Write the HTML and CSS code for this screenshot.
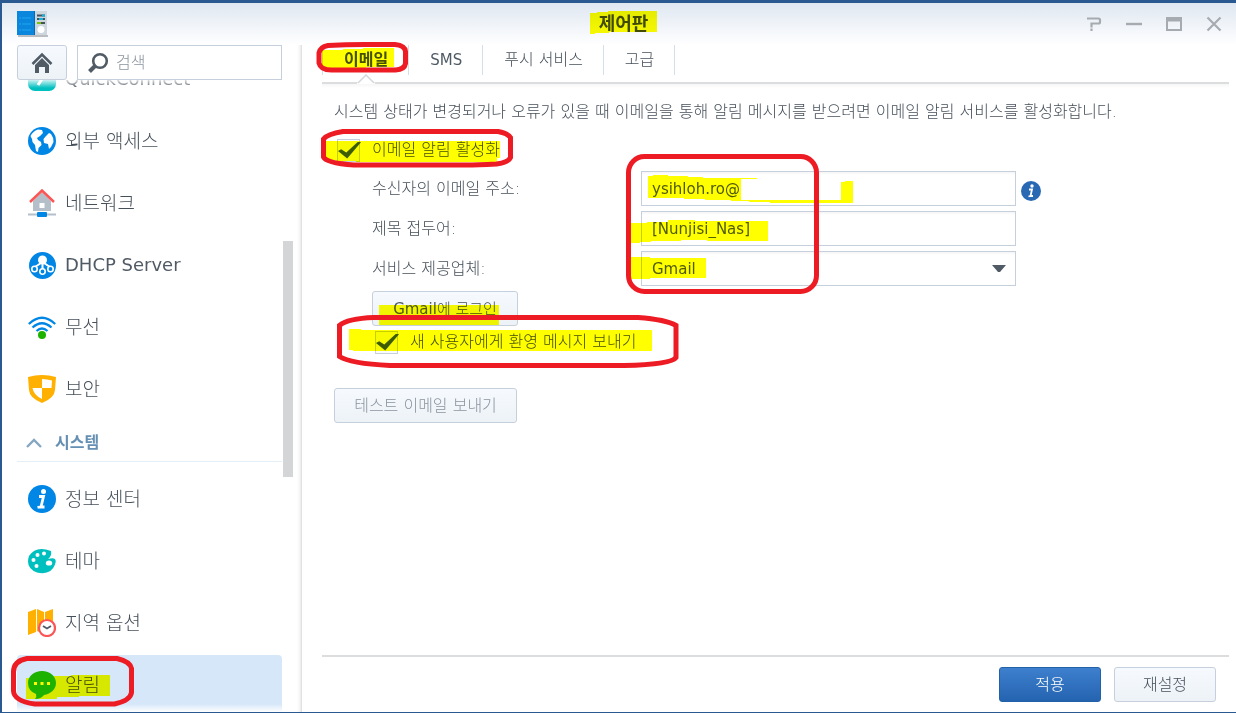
FILE: index.html
```html
<!DOCTYPE html>
<html lang="ko">
<head>
<meta charset="utf-8">
<title>제어판</title>
<link rel="stylesheet" href="styles.css">
</head>
<body>
<div class="window">
  <header class="titlebar">
    <svg class="app-icon" width="32" height="28" viewBox="0 0 32 28" aria-hidden="true">
      <rect x="1" y="25" width="30" height="2" fill="#b9bcc0"/>
      <rect x="17" y="1" width="13" height="24" fill="#cdd5dd"/>
      <rect x="0" y="1" width="18" height="24" fill="#0a86dc"/>
      <path d="M17 1h1v24h-1z" fill="#0869b4"/>
      <path d="M2 8h2M5 8h9M2 14h2M5 14h9M2 20h2M5 20h9" stroke="#20a8f2" stroke-width="1.2"/>
      <path d="M20 5.500h8M20 9h8M20 13h8" stroke="#46525e" stroke-width="1.800"/>
      <path d="M25 5.500h3M22 9h4" stroke="#10b5e0" stroke-width="1.800"/>
      <path d="M20 13h4" stroke="#7ed000" stroke-width="1.800"/>
      <circle cx="24" cy="19.500" r="3.500" fill="#fff"/>
    </svg>
    <h1 class="title">제어판</h1>
    <div class="window-tools">
      <button class="tool" aria-label="도움말"><svg width="16" height="16" viewBox="0 0 16 16"><path d="M1 2.500h11.500q1.500 0 1.500 1.500v2q0 1.500-1.500 1.500H5.500v4M5.500 12.500v2.500" fill="none" stroke="#a6abb2" stroke-width="2.200"/></svg></button>
      <button class="tool" aria-label="최소화"><svg width="16" height="16" viewBox="0 0 16 16"><path d="M0 8h16" stroke="#a6abb2" stroke-width="2.400"/></svg></button>
      <button class="tool" aria-label="최대화"><svg width="16" height="16" viewBox="0 0 16 16"><path d="M1 2h14v12H1z" fill="none" stroke="#a6abb2" stroke-width="2"/><path d="M0 1.500h16v4H0z" fill="#a6abb2"/></svg></button>
      <button class="tool" aria-label="닫기"><svg width="16" height="16" viewBox="0 0 16 16"><path d="M1.500 1.500l13 13M14.500 1.500l-13 13" stroke="#a6abb2" stroke-width="2.200"/></svg></button>
    </div>
  </header>

  <div class="columns">
    <aside class="sidebar">
      <div class="sidebar-top">
        <button class="home" aria-label="홈"><svg width="22" height="22" viewBox="0 0 22 22"><path d="M1.500 12L11 2.500 20.500 12" fill="none" stroke="#505b66" stroke-width="2.500"/><path d="M4 13l7-7 7 7v8h-4v-6H8v6H4z" fill="#505b66"/></svg></button>
        <label class="search">
          <svg width="22" height="22" viewBox="0 0 22 22" aria-hidden="true"><circle cx="13" cy="9" r="6.800" fill="none" stroke="#505b66" stroke-width="2.600"/><path d="M8 14l-5.500 5.500" stroke="#505b66" stroke-width="4"/></svg>
          <input class="search-input" type="text" placeholder="검색" aria-label="검색">
        </label>
      </div>
      <nav class="list">
        <a class="item latin" href="#quickconnect">
          <svg width="28" height="28" viewBox="0 0 28 28"><rect x="0" y="6" width="28" height="20" rx="7" fill="#00bfbf"/><path d="M10 20l6-9" stroke="#fff" stroke-width="3"/></svg>QuickConnect</a>
        <a class="item" href="#external">
          <svg width="28" height="28" viewBox="0 0 28 28"><circle cx="14" cy="14" r="14" fill="#0086e5"/><path d="M2.500 9Q5 4 10 2.500l4 .5 1 3-3 3-3 2 1 2 3 2 .5 3-3 3-.5 4-2-1-1-6-2.500-3-.5-3zM18 9l3-3 2 1q3 4 2.500 8L23 20l-2 2-1-5-4-1-.5-4z" fill="#fff"/></svg>외부 액세스</a>
        <a class="item" href="#network">
          <svg width="28" height="28" viewBox="0 0 28 28"><path d="M5 12l9-9 9 9v10H5z" fill="#b4bfca"/><path d="M2 13L14 1.500 26 13" fill="none" stroke="#fc5555" stroke-width="2.500"/><rect x="11.500" y="14" width="5" height="5" fill="#fff"/><path d="M0 25.500h28" stroke="#b4bfca" stroke-width="2"/><rect x="9" y="23" width="10" height="5" rx="1" fill="#0086e5"/></svg>네트워크</a>
        <a class="item latin" href="#dhcp">
          <svg width="28" height="28" viewBox="0 0 28 28"><circle cx="14.500" cy="14.500" r="13.500" fill="#0086e5"/><path d="M14.500 12v6M13 12l-6 4M16 12l6 4" stroke="#fff" stroke-width="2"/><circle cx="14.500" cy="9" r="4.500" fill="#fff"/><g fill="#0086e5" stroke="#fff" stroke-width="1.600"><circle cx="6.500" cy="18" r="2.700"/><circle cx="14.500" cy="20.500" r="2.700"/><circle cx="22.500" cy="18" r="2.700"/></g></svg>DHCP Server</a>
        <a class="item" href="#wireless">
          <svg width="28" height="28" viewBox="0 0 28 28"><g fill="none" stroke="#0086e5" stroke-width="2.300"><path d="M.8 11Q14-1.500 27.200 11"/><path d="M4.500 14.500Q14 6 23.500 14.500"/><path d="M8.500 18Q14 13 19.500 18"/></g><circle cx="14" cy="22" r="4" fill="#1db100"/></svg>무선</a>
        <a class="item" href="#security">
          <svg width="28" height="28" viewBox="0 0 28 28"><path d="M0 2Q14-2 28 2l-1 13q-.5 8-13 13Q1.500 23 1 15z" fill="#ffb000"/><path d="M14 4q5 0 10 1.500L23.500 13H14zM14 13v11q-8.500-4-9.500-11z" fill="#fff"/></svg>보안</a>
        <button class="section" aria-expanded="true">
          <svg width="16" height="10" viewBox="0 0 16 10"><path d="M1 9l7-7 7 7" fill="none" stroke="#86a7c2" stroke-width="2.400"/></svg>시스템</button>
        <a class="item" href="#info">
          <svg width="28" height="28" viewBox="0 0 28 28"><circle cx="14" cy="14" r="14" fill="#0086e5"/><circle cx="15.500" cy="6.500" r="2.500" fill="#fff"/><path d="M11 11.500h4.500l-2.500 10.500h3.500M9.500 22.500l4-1" fill="none" stroke="#fff" stroke-width="2.800"/></svg>정보 센터</a>
        <a class="item" href="#theme">
          <svg width="28" height="28" viewBox="0 0 28 28"><path d="M23 4Q8-2 1 9-3 21 9 25.500q14 3 18-8Q30 9 20 12q4-3 3-8z" fill="#00bfbf"/><g fill="#fff"><circle cx="9.500" cy="8" r="2"/><circle cx="16" cy="6.500" r="2"/><circle cx="5.500" cy="13" r="2"/><circle cx="8.500" cy="19" r="2"/><ellipse cx="21" cy="16" rx="3.200" ry="2.600"/></g></svg>테마</a>
        <a class="item" href="#region">
          <svg width="28" height="28" viewBox="0 0 28 28"><path d="M0 3l8-3v23l-8 3zM9 0l7 3v22l-7-3zM17 3l8-3v20l-8 3z" fill="#ffb000"/><circle cx="19" cy="19" r="8" fill="#fff" stroke="#fc5555" stroke-width="2.200"/><path d="M15 17l4 2.500 4-2.500" fill="none" stroke="#505b66" stroke-width="1.800"/></svg>지역 옵션</a>
        <a class="item selected" href="#notification" aria-current="page">
          <svg width="28" height="28" viewBox="0 0 28 28"><path d="M14 0c8 0 14 5 14 12s-6 11-12 12q-3 4-9 4 2-2 1-5Q0 20 0 12C0 5 6 0 14 0z" fill="#1db100"/><path d="M6 12.500h3M12.500 12.500h3M19 12.500h3" stroke="#fff" stroke-width="3"/></svg>알림</a>
      </nav>
      <div class="scroll-thumb"></div>
    </aside>

    <main class="main">
      <nav class="tabs">
        <a class="tab active" href="#email" aria-current="page">이메일<svg class="notch" width="18" height="10" viewBox="0 0 18 10"><path d="M0 9L9 1l9 8v1H0z" fill="#fff"/><path d="M1 9l8-8 8 8" fill="none" stroke="#d5d7da" stroke-width="1.500"/></svg></a>
        <a class="tab tab-sms" href="#sms">SMS</a>
        <a class="tab" href="#push">푸시 서비스</a>
        <a class="tab" href="#advanced">고급</a>
      </nav>
      <form class="form">
        <p class="description">시스템 상태가 변경되거나 오류가 있을 때 이메일을 통해 알림 메시지를 받으려면 이메일 알림 서비스를 활성화합니다.</p>
        <label class="check"><input class="box" type="checkbox" checked>이메일 알림 활성화</label>
        <div class="fields">
          <label for="recipient">수신자의 이메일 주소:</label>
          <div class="control"><input class="field" id="recipient" type="text" value="ysihloh.ro@">
            <svg class="info" width="20" height="20" viewBox="0 0 20 20" aria-hidden="true"><circle cx="10" cy="10" r="10" fill="#2969b4"/><circle cx="11" cy="5" r="1.700" fill="#fff"/><path d="M8 8.500h3l-1.500 6.500h2.500M7.500 15.500l2-.5" fill="none" stroke="#fff" stroke-width="1.800"/></svg></div>
          <label for="prefix">제목 접두어:</label>
          <div class="control"><input class="field" id="prefix" type="text" value="[Nunjisi_Nas]"></div>
          <label for="provider">서비스 제공업체:</label>
          <div class="control"><div class="select-wrap"><select class="field" id="provider"><option>Gmail</option></select>
            <svg class="caret" width="14" height="8" viewBox="0 0 14 8" aria-hidden="true"><path d="M0 0h14L8 7H6z" fill="#505b66"/></svg></div></div>
          <div><button class="button login" type="button"><span class="brand">Gmail</span>에 로그인</button></div>
        </div>
        <label class="check nested"><input class="box" type="checkbox" checked>새 사용자에게 환영 메시지 보내기</label>
        <div><button class="button test" type="button" disabled>테스트 이메일 보내기</button></div>
      </form>
      <footer class="footer">
        <button class="button primary">적용</button>
        <button class="button reset">재설정</button>
      </footer>
    </main>
  </div>
</div>

<!-- highlighter marks -->
<svg class="overlay marker" width="1236" height="713" viewBox="0 0 1236 713" aria-hidden="true">
  <g fill="#ff0">
    <path d="M590 13h7v-1h11v-1h49v21h-48v1h-14v1h-5z"/>
    <path d="M322 50h21v-1h20v-1h31v19h-28v1h-44z"/>
    <path d="M325 141h175v17h-3v4H356v-1h-20v-1h-11z"/>
    <path d="M648 176h5v-1h15v1h20v1h15v1h54v1h-16v21h100v-18h4v-1h8v22H770v-1h-21v-1h-18v-1h-26v-1h-21v-1h-36z"/>
    <path d="M631 223h16v-1h21v-2h27v1h73v20h-61v-1h-26v1h-30v1h-11v1h-9z"/>
    <path d="M631 257h19v1h56v20h-56v1h-19z"/>
    <path d="M379 305h120v20H379z"/>
    <path d="M349 329h12v1h291v21H353v-1h-4z"/>
    <path d="M26 678h28v-2h17v-1h39v21H79v1H57v2H26z"/>
  </g>
</svg>
<!-- red outlines -->
<svg class="overlay" width="1236" height="713" viewBox="0 0 1236 713" aria-hidden="true">
  <g fill="none" stroke="#ed1c24" stroke-width="5">
    <path d="M328 45.500Q345 44.500 365 44.500h30q10 1 10.500 7v12q-1 6-10 6.500h-64q-11 0-12.500-7V53q1-6 9-7.500z"/>
    <path d="M343 131.500h155q10 2 12.500 6v20q-2 5-14 6.500-20 1-30 1H354q-28-2-30.500-8v-18q4-5 19.500-7.500z"/>
    <rect x="628.500" y="156.500" width="188" height="135" rx="16"/>
    <path d="M374 317.500h264q28 2 38 8v32q-5 7-52 8H390q-40-2-50.500-9v-31q8-7 34.500-8z"/>
    <path d="M27 658.500h90q13 3 14.500 10v24q-1 8-17 11.500H35Q14 701 13.500 691v-19q0-11 13.500-13.500z"/>
  </g>
</svg>
</body>
</html>
```

FILE: styles.css
```css
* { box-sizing: border-box; }

body {
  margin: 0;
  background: #2a5991;
  color: #46505a;
  font: 300 16px/24px "DejaVu Sans", "Noto Sans CJK KR", sans-serif;
}

button, input, select { font: inherit; color: inherit; }
a { color: inherit; text-decoration: none; }
svg { flex: none; }

.window {
  display: flex;
  flex-direction: column;
  height: 100vh;
  border: solid #2a5991;
  border-width: 3px 0 1px 2px;
  background: linear-gradient(#dfe7f1, #fff 42px) #fff;
}

.titlebar {
  display: grid;
  grid-template-columns: 1fr auto 1fr;
  align-items: center;
  height: 42px;
  padding: 0 14px 0 15px;
}
.title { margin: 0; padding-left: 8px; font-size: 18px; font-weight: bold; color: #414b55; }
.window-tools { display: flex; justify-content: flex-end; gap: 24px; }
.tool { display: flex; padding: 0; border: 0; background: none; }

.columns { display: flex; flex: 1; min-height: 0; }

.sidebar {
  position: relative;
  display: flex;
  flex-direction: column;
  flex: none;
  width: 300px;
  padding: 0 20px 0 15px;
  background: linear-gradient(to left, #dcdcdc, #f4f4f4 2px, #fff 5px);
}
.sidebar-top { display: flex; gap: 10px; height: 35px; }
.home {
  display: grid;
  place-items: center;
  width: 50px;
  padding: 0;
  border: 1px solid #c6d0dc;
  border-radius: 3px;
  background: linear-gradient(#f6faff, #edf2f7);
}
.search {
  display: flex;
  flex: 1;
  align-items: center;
  gap: 7px;
  padding-left: 9px;
  border: 1px solid #c6d0dc;
  background: #fff;
}
.search-input { width: 100%; min-width: 0; padding: 0; border: 0; outline: 0; background: none; }
.search-input::placeholder { color: #8a939d; opacity: 1; }

.list {
  position: relative;
  display: flex;
  flex: 1;
  flex-direction: column;
  gap: 2px;
  min-height: 0;
  overflow: hidden;
}
.list::before, .list::after {
  content: "";
  position: absolute;
  right: 0;
  left: 0;
  height: 8px;
}
.list::before { top: 0; background: linear-gradient(#fffc, #fff0); }
.list::after { bottom: 0; background: linear-gradient(#fff0, #fff); }
.item {
  display: flex;
  flex: none;
  align-items: center;
  gap: 9px;
  height: 60px;
  padding-left: 11px;
  border-radius: 4px;
  font-size: 19px;
}
.item:first-child { margin-top: -31px; }
.latin { font-size: 18px; }
.latin, .tab-sms, .field, .brand { font-weight: 400; color: #505a64; }
.selected { background: #d6e7f9; }
.section {
  display: flex;
  flex: none;
  align-items: center;
  gap: 13px;
  height: 41px;
  margin-bottom: 5px;
  padding: 4px 0 0 9px;
  border: 0;
  border-bottom: 1px solid #e3eef6;
  background: none;
  color: #6590b4;
  font-weight: bold;
}
.scroll-thumb {
  position: absolute;
  top: 196px;
  right: 9px;
  width: 10px;
  height: 236px;
  background: #d4d5d7;
}

.main { display: flex; flex: 1; flex-direction: column; min-width: 0; padding: 0 7px 0 20px; }

.tabs {
  display: flex;
  flex: none;
  height: 39px;
  padding-bottom: 7px;
  border-bottom: 2px solid #dcdddf;
}
.tab {
  position: relative;
  display: flex;
  align-items: center;
  padding: 0 20px 0 21px;
  border-right: 1px solid #d5dfea;
}
.active { border-left: 1px solid #d5dfea; font-weight: bold; }
.tab-sms { font-size: 15px; }
.notch { position: absolute; bottom: -9px; left: 34px; }

.form {
  display: flex;
  flex: 1;
  flex-direction: column;
  min-height: 0;
  padding: 16px 12px 0;
  background: linear-gradient(#f6f6f6, #fff 4px);
}
.description { margin: 0 0 14px; }
.check { display: flex; align-items: center; gap: 12px; height: 24px; padding-left: 3px; }
.box {
  display: grid;
  place-items: center;
  width: 23px;
  height: 23px;
  margin: 0;
  border: 1px solid #c6d0dc;
  background: #f8fafc;
  appearance: none;
}
.box:checked::before {
  content: "";
  width: 23px;
  height: 17px;
  background: #3d5c52;
  clip-path: polygon(0 56%, 14% 45%, 36% 65%, 88% 0, 100% 4%, 40% 100%);
}
.fields {
  display: grid;
  grid-template-columns: 269px 1fr;
  grid-auto-rows: 35px;
  row-gap: 5px;
  align-items: center;
  margin: 9px 0 4px;
  padding-left: 38px;
}
.control { display: flex; align-items: center; gap: 5px; }
.select-wrap { position: relative; display: flex; }
.field {
  width: 375px;
  height: 35px;
  padding: 0 10px;
  border: 1px solid #c6d0dc;
  border-radius: 0;
  background: linear-gradient(#f5f5f5, #fff 3px);
  font-size: 15px;
  appearance: none;
}
.info { margin-top: 4px; }
.caret { position: absolute; top: 14px; right: 10px; }
.nested { padding-left: 41px; margin-bottom: 34px; }

.button {
  height: 35px;
  padding: 0 18px;
  border: 1px solid #c6d0dc;
  border-radius: 3px;
  background: linear-gradient(#f6faff, #edf2f7);
}
.login { width: 146px; padding: 0; font-size: 15px; white-space: nowrap; }
.test { width: 183px; color: #8a939d; white-space: nowrap; }
.footer {
  display: flex;
  flex: none;
  justify-content: flex-end;
  gap: 13px;
  height: 57px;
  padding: 10px 13px 0 0;
  border-top: 2px solid #dcdddf;
}
.primary, .reset { width: 102px; }
.primary { border-color: #2260a8; background: linear-gradient(#3e80ce, #2463b0); color: #fff; }

.overlay { position: absolute; top: 0; left: 0; pointer-events: none; }
.marker { mix-blend-mode: multiply; }
```
